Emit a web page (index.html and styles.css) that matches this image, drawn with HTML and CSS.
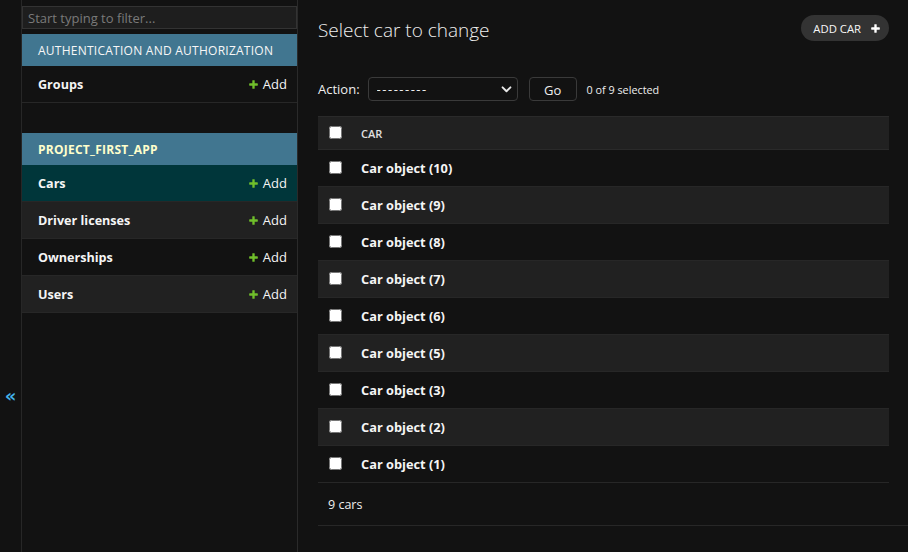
FILE: index.html
```html
<!DOCTYPE html>
<html lang="en">
<head>
<meta charset="utf-8">
<title>Select car to change</title>
<link rel="stylesheet" href="styles.css">
</head>
<body>
<div class="page">
  <div class="toggle-col"><button class="toggle" type="button">«</button></div>
  <nav class="sidebar">
    <input class="filter" type="search" placeholder="Start typing to filter...">
    <div class="module">
      <div class="caption">Authentication and Authorization</div>
      <div class="row"><a class="model">Groups</a><a class="add"><svg class="plus" viewBox="0 0 1792 1792"><path d="M1600 796v192q0 40-28 68t-68 28h-416v416q0 40-28 68t-68 28h-192q-40 0-68-28t-28-68v-416h-416q-40 0-68-28t-28-68v-192q0-40 28-68t68-28h416v-416q0-40 28-68t68-28h192q40 0 68 28t28 68v416h416q40 0 68 28t28 68z"/></svg>Add</a></div>
    </div>
    <div class="module current-app">
      <div class="caption">Project_First_App</div>
      <div class="row current"><a class="model">Cars</a><a class="add"><svg class="plus" viewBox="0 0 1792 1792"><path d="M1600 796v192q0 40-28 68t-68 28h-416v416q0 40-28 68t-68 28h-192q-40 0-68-28t-28-68v-416h-416q-40 0-68-28t-28-68v-192q0-40 28-68t68-28h416v-416q0-40 28-68t68-28h192q40 0 68 28t28 68v416h416q40 0 68 28t28 68z"/></svg>Add</a></div>
      <div class="row alt"><a class="model">Driver licenses</a><a class="add"><svg class="plus" viewBox="0 0 1792 1792"><path d="M1600 796v192q0 40-28 68t-68 28h-416v416q0 40-28 68t-68 28h-192q-40 0-68-28t-28-68v-416h-416q-40 0-68-28t-28-68v-192q0-40 28-68t68-28h416v-416q0-40 28-68t68-28h192q40 0 68 28t28 68v416h416q40 0 68 28t28 68z"/></svg>Add</a></div>
      <div class="row"><a class="model">Ownerships</a><a class="add"><svg class="plus" viewBox="0 0 1792 1792"><path d="M1600 796v192q0 40-28 68t-68 28h-416v416q0 40-28 68t-68 28h-192q-40 0-68-28t-28-68v-416h-416q-40 0-68-28t-28-68v-192q0-40 28-68t68-28h416v-416q0-40 28-68t68-28h192q40 0 68 28t28 68v416h416q40 0 68 28t28 68z"/></svg>Add</a></div>
      <div class="row alt"><a class="model">Users</a><a class="add"><svg class="plus" viewBox="0 0 1792 1792"><path d="M1600 796v192q0 40-28 68t-68 28h-416v416q0 40-28 68t-68 28h-192q-40 0-68-28t-28-68v-416h-416q-40 0-68-28t-28-68v-192q0-40 28-68t68-28h416v-416q0-40 28-68t68-28h192q40 0 68 28t28 68v416h416q40 0 68 28t28 68z"/></svg>Add</a></div>
    </div>
  </nav>
  <main class="content">
    <div class="head">
      <h1>Select car to change</h1>
      <a class="addbtn">ADD CAR<svg class="plus white" viewBox="0 0 1792 1792"><path d="M1600 796v192q0 40-28 68t-68 28h-416v416q0 40-28 68t-68 28h-192q-40 0-68-28t-28-68v-416h-416q-40 0-68-28t-28-68v-192q0-40 28-68t68-28h416v-416q0-40 28-68t68-28h192q40 0 68 28t28 68v416h416q40 0 68 28t28 68z"/></svg></a>
    </div>
    <div class="actions">
      <label class="action-label">Action:</label>
      <div class="select-wrap">
        <select class="select"><option>---------</option></select>
        <svg class="chev" viewBox="0 0 12 8"><path d="M1.5 1.5 6 6l4.5-4.5" fill="none" stroke="#e8e8e8" stroke-width="2.2" stroke-linecap="round" stroke-linejoin="round"/></svg>
      </div>
      <button class="go" type="button">Go</button>
      <span class="counter">0 of 9 selected</span>
    </div>
    <table class="results">
      <thead>
        <tr><th class="cb"><input type="checkbox"></th><th class="col">Car</th></tr>
      </thead>
      <tbody>
        <tr><td class="cb"><input type="checkbox"></td><td class="obj">Car object (10)</td></tr>
        <tr><td class="cb"><input type="checkbox"></td><td class="obj">Car object (9)</td></tr>
        <tr><td class="cb"><input type="checkbox"></td><td class="obj">Car object (8)</td></tr>
        <tr><td class="cb"><input type="checkbox"></td><td class="obj">Car object (7)</td></tr>
        <tr><td class="cb"><input type="checkbox"></td><td class="obj">Car object (6)</td></tr>
        <tr><td class="cb"><input type="checkbox"></td><td class="obj">Car object (5)</td></tr>
        <tr><td class="cb"><input type="checkbox"></td><td class="obj">Car object (3)</td></tr>
        <tr><td class="cb"><input type="checkbox"></td><td class="obj">Car object (2)</td></tr>
        <tr><td class="cb"><input type="checkbox"></td><td class="obj">Car object (1)</td></tr>
      </tbody>
    </table>
    <p class="paginator">9 cars</p>
  </main>
</div>
</body>
</html>
```

FILE: styles.css
```css
* { box-sizing: border-box; }
html, body {
  margin: 0;
  background: #121212;
  color: #eeeeee;
  font-family: "Segoe UI", "Open Sans", sans-serif;
  font-size: 13px;
}
.page { display: flex; min-height: 552px; }

.toggle-col {
  flex: 0 0 22px;
  border-right: 1px solid #272727;
  display: flex;
  justify-content: center;
  align-items: flex-start;
  padding-top: 384px;
}
.toggle {
  background: none;
  border: 0;
  padding: 0;
  color: #44b4ea;
  font-family: "DejaVu Sans", sans-serif;
  font-size: 18px;
  line-height: 24px;
  font-weight: bold;
}

.sidebar { flex: 0 0 276px; border-right: 1px solid #2a2a2a; }
.filter {
  display: block;
  width: 100%;
  height: 23px;
  margin: 6px 0 5px;
  padding: 2px 5px;
  background: #1e1e1e;
  border: 1px solid #333;
  color: #eee;
  font: inherit;
  font-size: 13px;
  outline: none;
}
.filter::placeholder { color: #7a7a7a; }
.module { margin-bottom: 30px; }
.caption {
  height: 32px;
  line-height: 33px;
  padding: 0 16px;
  background: #417690;
  color: #f7f7f7;
  text-transform: uppercase;
  letter-spacing: 0.25px;
  font-size: 12px;
  white-space: nowrap;
  overflow: hidden;
}
.current-app .caption { color: #ffffcc; font-weight: bold; }
.row {
  display: flex;
  justify-content: space-between;
  align-items: center;
  height: 37px;
  padding: 0 10px 0 16px;
  border-bottom: 1px solid #272727;
}
.row.alt { background: #212121; }
.row.current { background: #00363a; }
.model { color: #f5f5f5; font-weight: bold; font-size: 12.6px; }
.add { color: #f5f5f5; display: flex; align-items: center; }
.plus { width: 11px; height: 11px; fill: #70bf2b; margin-right: 4px; }
.plus.white { fill: #ffffff; margin: 0 0 0 9px; }

.content { flex: 1; padding: 15px 19px 0 20px; }
.head { display: flex; justify-content: space-between; align-items: flex-start; }
h1 {
  margin: 3px 0 0;
  font-size: 19px;
  line-height: 24px;
  font-weight: 300;
  color: #eeeeee;
}
.addbtn {
  display: flex;
  align-items: center;
  height: 26px;
  padding: 0 8px 0 12px;
  border-radius: 13px;
  background: #333333;
  color: #f7f7f7;
  font-size: 11.3px;
  letter-spacing: 0;
}

.actions { display: flex; align-items: center; height: 24px; margin-top: 35px; }
.action-label { margin-right: 8px; }
.select-wrap { position: relative; width: 150px; height: 24px; }
.select {
  appearance: none;
  width: 100%;
  height: 100%;
  background: #121212;
  color: #eee;
  border: 1px solid #3a3a3a;
  border-radius: 4px;
  padding: 0 8px;
  font: inherit;
  font-size: 13px;
  letter-spacing: 1.5px;
}
.chev { position: absolute; right: 6px; top: 9px; width: 11px; height: 7px; }
.go {
  margin-left: 11px;
  width: 48px;
  height: 24px;
  background: #121212;
  color: #eee;
  border: 1px solid #3a3a3a;
  border-radius: 4px;
  font: inherit;
  font-size: 13px;
  padding: 2px 0 0;
}
.counter { margin-left: 10px; font-size: 10.8px; }

.results { width: 100%; margin-top: 15px; border-collapse: collapse; }
.results th, .results td { padding: 0; text-align: left; vertical-align: middle; }
.results thead tr { background: #212121; border-top: 1px solid #2a2a2a; border-bottom: 1px solid #2a2a2a; }
.results thead th { height: 33px; }
.results tbody tr { border-bottom: 1px solid #272727; }
.results tbody tr:nth-child(even) { background: #212121; }
.results tbody td { height: 37px; }
.cb { width: 43px; padding-left: 11px !important; }
.cb input { margin: 0 0 2px; width: 13px; height: 13px; display: block; }
.col { font-size: 11px; font-weight: 600; color: #e0e0e0; text-transform: uppercase; }
.obj { font-weight: bold; color: #f5f5f5; font-size: 12.8px; }

.paginator {
  margin: 0 -19px 0 0;
  height: 43px;
  line-height: 44px;
  padding-left: 10px;
  border-bottom: 1px solid #272727;
  font-size: 12.5px;
}
```
